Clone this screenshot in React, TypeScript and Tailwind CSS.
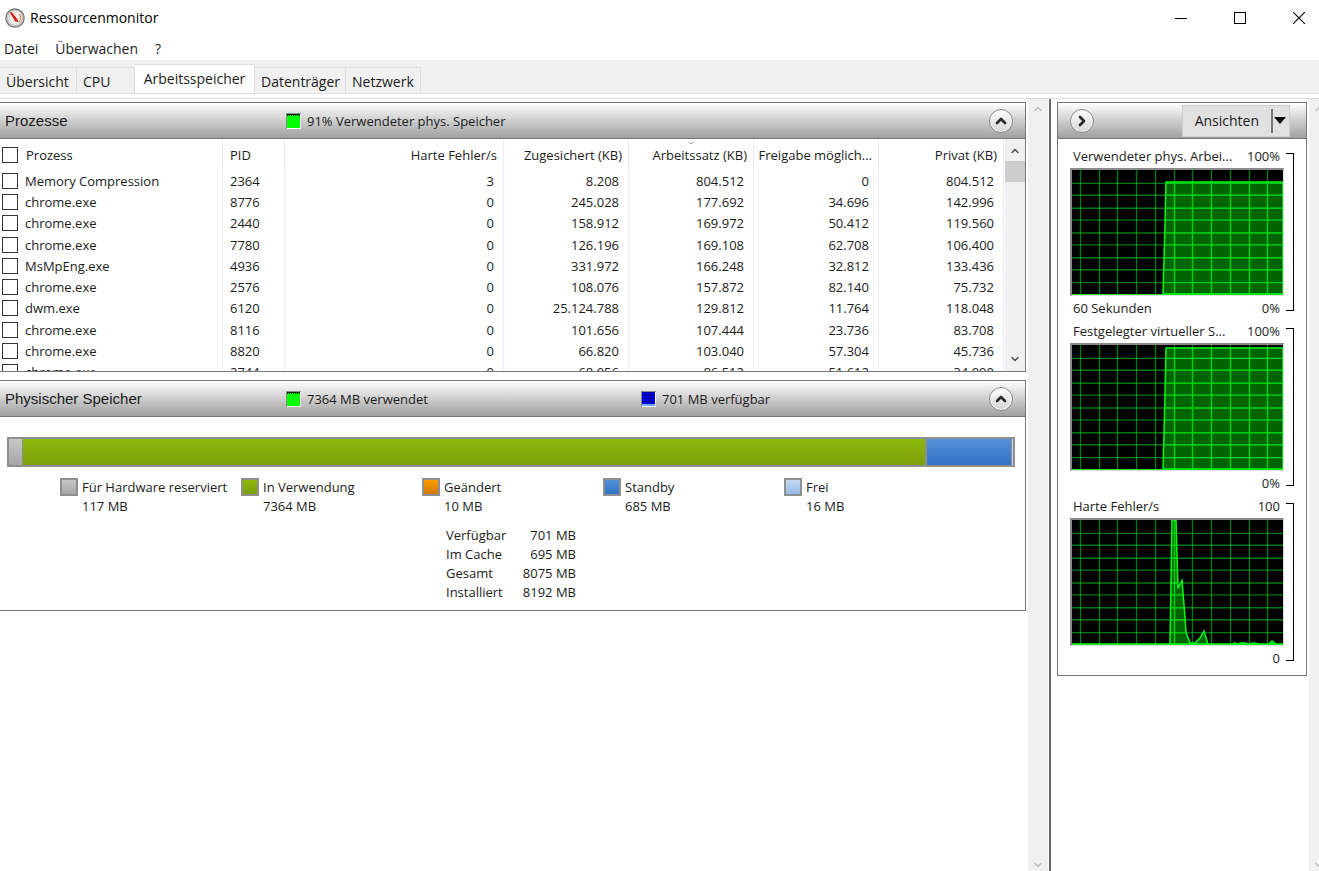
import { useState } from 'react';
import type { ReactNode } from 'react';
import clsx from 'clsx';
import { ChevronDown, ChevronRight, ChevronUp } from 'lucide-react';

const tabs = [
  { name: 'Übersicht', width: 'w-[77px]' },
  { name: 'CPU', width: 'w-[58px]' },
  { name: 'Arbeitsspeicher', width: 'w-[120px]' },
  { name: 'Datenträger', width: 'w-[91px]' },
  { name: 'Netzwerk', width: 'w-[75px]' },
];

const columns = [
  'Harte Fehler/s',
  'Zugesichert (KB)',
  'Arbeitssatz (KB)',
  'Freigabe möglich...',
  'Privat (KB)',
];

const processes = [
  ['Memory Compression', '2364', '3', '8.208', '804.512', '0', '804.512'],
  ['chrome.exe', '8776', '0', '245.028', '177.692', '34.696', '142.996'],
  ['chrome.exe', '2440', '0', '158.912', '169.972', '50.412', '119.560'],
  ['chrome.exe', '7780', '0', '126.196', '169.108', '62.708', '106.400'],
  ['MsMpEng.exe', '4936', '0', '331.972', '166.248', '32.812', '133.436'],
  ['chrome.exe', '2576', '0', '108.076', '157.872', '82.140', '75.732'],
  ['dwm.exe', '6120', '0', '25.124.788', '129.812', '11.764', '118.048'],
  ['chrome.exe', '8116', '0', '101.656', '107.444', '23.736', '83.708'],
  ['chrome.exe', '8820', '0', '66.820', '103.040', '57.304', '45.736'],
  ['chrome.exe', '2744', '0', '68.056', '86.512', '51.612', '34.900'],
];

const legend = [
  { name: 'Für Hardware reserviert', value: '117 MB', color: 'from-[#c8c8c8] to-[#a6a6a6]' },
  { name: 'In Verwendung', value: '7364 MB', color: 'from-[#8db90c] to-[#7c9f0a]' },
  { name: 'Geändert', value: '10 MB', color: 'from-[#ff9c05] to-[#cf7a00]' },
  { name: 'Standby', value: '685 MB', color: 'from-[#5590d8] to-[#3173c6]' },
  { name: 'Frei', value: '16 MB', color: 'from-[#c4d9f3] to-[#97b9e6]' },
];

const totals = [
  ['Verfügbar', '701 MB'],
  ['Im Cache', '695 MB'],
  ['Gesamt', '8075 MB'],
  ['Installiert', '8192 MB'],
];

const charts = [
  {
    title: 'Verwendeter phys. Arbei...',
    max: '100%',
    span: '60 Sekunden',
    min: '0%',
    points: '91,125 92,90 93,55 94,12 211,12 211,125',
  },
  {
    title: 'Festgelegter virtueller S...',
    max: '100%',
    span: '',
    min: '0%',
    points: '91,125 92,90 93,50 94,3 211,3 211,125',
  },
  {
    title: 'Harte Fehler/s',
    max: '100',
    span: '',
    min: '0',
    points:
      '0,125 98,125 100,0 104,0 106,69 110,61 113,98 114,113 118,124 123,124 128,119 132,112 136,125 160,125 163,124 166,125 169,124 173,124 176,125 182,124 187,125 197,125 200,122 204,125 211,125',
  },
];

const vertical = [8, 27, 45, 64, 83, 102, 120, 139, 158, 177, 195];
const horizontal = [13, 25, 38, 50, 63, 75, 88, 100, 113];

function Logo() {
  return (
    <svg viewBox="0 0 20 20" className="size-5">
      <circle cx="10" cy="10" r="9.2" fill="#c9c9c9" stroke="#777" strokeWidth="1.2" />
      <circle cx="10" cy="10" r="7.3" fill="#f3f1ee" stroke="#b5b5b5" strokeWidth="0.6" />
      <path d="M14.3 6.2a5.6 5.6 0 0 1-1 8.2" fill="none" stroke="#e89a7c" strokeWidth="1.5" />
      <path d="M5.7 13.8a5.6 5.6 0 0 1 0-7.6" fill="none" stroke="#c8c8c8" strokeWidth="1" />
      <path d="M4.6 3.9 7 4.4l5.8 7.4-2.6 1.8z" fill="#d8150f" />
      <path d="M10.2 13.6 12.8 11.8l.3 2.2z" fill="#8c2a22" />
    </svg>
  );
}

function RoundButton({ label, children }: { label: string; children: ReactNode }) {
  return (
    <button
      aria-label={label}
      className="flex size-6 items-center justify-center rounded-full border border-[#8a8a8a] bg-linear-to-b from-white to-[#d4d4d4] text-[#2b2b2b] shadow-[inset_0_0_0_1px_#f6f6f6]"
    >
      {children}
    </button>
  );
}

function Stat({ color, children }: { color: 'green' | 'blue'; children: ReactNode }) {
  return (
    <span className="flex w-[355px] shrink-0 items-center gap-[6px] last-of-type:w-auto">
      <svg viewBox="0 0 15 16" className="h-4 w-[15px]" shapeRendering="crispEdges">
        <rect width="15" height="16" fill="#fff" />
        <path d="M0 0H15V1H1V16H0z" fill="#8c8c8c" />
        {color === 'green' ? (
          <>
            <rect x="1" y="1" width="13" height="14" fill="#00ff00" />
            <rect x="1" y="1" width="13" height="1" fill="#00320a" />
            <path d="M1 2.5H14" stroke="#00320a" strokeDasharray="1 1" />
          </>
        ) : (
          <>
            <rect x="1" y="1" width="13" height="12" fill="#0000f0" />
            <path d="M1 1.5H14M1 4.5H14M1 7.5H14M1 10.5H14M4.5 1V13M7.5 1V13M10.5 1V13" stroke="#0000a0" />
            <rect x="1" y="13" width="13" height="2" fill="#66b0ff" />
          </>
        )}
      </svg>
      {children}
    </span>
  );
}

function PanelHeader({ title, children }: { title: string; children: ReactNode }) {
  return (
    <header className="flex h-9 items-center border-b border-[#777] bg-linear-to-b from-white to-[#a0a0a0] pr-3">
      <h2 className="w-[286px] shrink-0 pl-[5px] font-['Liberation_Sans',Arial,sans-serif] text-[15px]">{title}</h2>
      {children}
      <div className="ml-auto">
        <RoundButton label={`${title} einklappen`}>
          <ChevronUp className="size-4" strokeWidth={4} />
        </RoundButton>
      </div>
    </header>
  );
}

function ScrollBar() {
  return (
    <div className="flex w-5 shrink-0 flex-col items-center justify-between bg-[#f0f0f0] pt-1 text-[#bcbcbc]">
      <ChevronUp className="size-3" strokeWidth={3} />
      <ChevronDown className="size-3" strokeWidth={3} />
    </div>
  );
}

function Check({ label }: { label: string }) {
  return (
    <input
      type="checkbox"
      aria-label={label}
      className="size-4 shrink-0 appearance-none border border-[#333] bg-white checked:bg-[#333]"
    />
  );
}

function ProcessTable() {
  return (
    <div className="flex h-[232px] gap-px overflow-hidden">
      <div className="min-w-0 flex-1">
        <table className="h-[244px] w-full table-fixed border-collapse">
          <colgroup>
            <col />
            <col className="w-[62px]" />
            <col className="w-[219px]" />
            <col className="w-[125px]" />
            <col className="w-[125px]" />
            <col className="w-[125px]" />
            <col className="w-[125px]" />
          </colgroup>
          <thead>
            <tr className="h-[31px]">
              <th className="border-r border-[#e8eef5] p-0 pl-[2px] text-left font-normal">
                <span className="flex items-center gap-2">
                  <Check label="Alle Prozesse" />
                  Prozess
                </span>
              </th>
              <th className="border-r border-[#e8eef5] p-0 pl-[7px] text-left font-normal">PID</th>
              {columns.map((column) => (
                <th
                  key={column}
                  className="relative border-r border-[#e8eef5] p-0 pr-[6px] text-right font-normal whitespace-nowrap"
                >
                  {column === 'Arbeitssatz (KB)' && (
                    <ChevronDown className="absolute top-0 left-1/2 size-2 -translate-x-1/2 text-[#777]" />
                  )}
                  {column}
                </th>
              ))}
            </tr>
          </thead>
          <tbody>
            {processes.map(([name, pid, ...values]) => (
              <tr key={pid} className="h-[21px]">
                <td className="border-r border-[#e8f1fb] p-0 pl-[2px]">
                  <span className="flex items-center gap-[7px]">
                    <Check label={`${name} ${pid}`} />
                    {name}
                  </span>
                </td>
                <td className="border-r border-[#e8f1fb] p-0 pl-[7px]">{pid}</td>
                {values.map((value, i) => (
                  <td key={i} className="border-r border-[#e8f1fb] p-0 pr-[9px] text-right">
                    {value}
                  </td>
                ))}
              </tr>
            ))}
          </tbody>
        </table>
      </div>
      <div className="flex w-5 shrink-0 flex-col items-center bg-[#f0f0f0] py-[6px] text-[#505050]">
        <ChevronUp className="size-3" strokeWidth={3} />
        <div className="mt-1 h-[21px] w-5 bg-[#cdcdcd]" />
        <ChevronDown className="mt-auto size-3" strokeWidth={3} />
      </div>
    </div>
  );
}

function MemoryPanel() {
  return (
    <>
      <div className="mt-5 mr-[10px] ml-[7px] flex h-[30px] border-2 border-[#8f8f8f]">
        <div className="w-[14px] border-r border-[#8f8f8f] bg-linear-to-b from-[#c8c8c8] to-[#a6a6a6]" />
        <div className="flex-[7364] border-r-2 border-[#8f8f8f] bg-linear-to-b from-[#8db90c] to-[#7c9f0a]" />
        <div className="flex-[685] bg-linear-to-b from-[#5590d8] to-[#3173c6]" />
        <div className="w-[2px] border-l border-[#8f8f8f] bg-[#c4d9f3]" />
      </div>
      <ul className="mt-[11px] flex pl-[60px]">
        {legend.map((item) => (
          <li key={item.name} className="flex w-[181px] gap-1 whitespace-nowrap">
            <span className={clsx('size-[18px] border-2 border-[#8f8f8f] bg-linear-to-b', item.color)} />
            <span className="leading-[19px]">
              {item.name}
              <br />
              {item.value}
            </span>
          </li>
        ))}
      </ul>
      <dl className="mt-[10px] ml-[446px] grid w-[130px] grid-cols-2 pb-2 leading-[19px]">
        {totals.map(([name, value]) => (
          <div key={name} className="contents">
            <dt>{name}</dt>
            <dd className="text-right">{value}</dd>
          </div>
        ))}
      </dl>
    </>
  );
}

function Chart({ title, max, span, min, points }: (typeof charts)[number]) {
  return (
    <section className="flex h-[175px] gap-[2px] pr-3 pl-3">
      <div className="min-w-0 flex-1">
        <div className="flex h-[21px] justify-between pr-1 pl-[3px] leading-[18px] whitespace-nowrap">
          <h3>{title}</h3>
          <span>{max}</span>
        </div>
        <svg
          viewBox="0 0 211 126"
          preserveAspectRatio="none"
          className="block h-32 w-full border-2 border-r border-b border-[#8a8a8a] border-r-[#dcdcdc] border-b-[#dcdcdc] bg-black"
        >
          <polygon points={points} fill="#006400" />
          <g stroke="#00b81e" strokeOpacity="0.65" strokeWidth="1.4">
            {vertical.map((x) => (
              <path key={x} d={`M${x}.5 0V126`} />
            ))}
            {horizontal.map((y) => (
              <path key={y} d={`M0 ${y}.5H211`} />
            ))}
          </g>
          <clipPath id={`area-${max}-${title.length}`}>
            <polygon points={points} />
          </clipPath>
          <g
            stroke="#00dc14"
            strokeOpacity="0.75"
            strokeWidth="1.4"
            clipPath={`url(#area-${max}-${title.length})`}
          >
            {vertical.map((x) => (
              <path key={x} d={`M${x}.5 0V126`} />
            ))}
            {horizontal.map((y) => (
              <path key={y} d={`M0 ${y}.5H211`} />
            ))}
          </g>
          <path d="M0 125.5H211" stroke="#2fd83a" />
          <polygon points={points} fill="none" stroke="#00fa14" strokeWidth="1.5" />
        </svg>
        <div className="flex justify-between pr-1 pl-[3px] leading-6">
          <span>{span}</span>
          <span>{min}</span>
        </div>
      </div>
      <div className="mt-[6px] h-[158px] w-2 border border-l-0 border-black" />
    </section>
  );
}

export default function App() {
  const [active, setActive] = useState('Arbeitsspeicher');
  return (
    <div className="flex min-h-screen flex-col overflow-hidden bg-white font-['Open_Sans','Segoe_UI',sans-serif] text-[13px] leading-[18px] text-[#1c1c1c]">
      <div className="flex h-9 items-center gap-[5px] pl-[5px] text-sm text-black">
        <Logo />
        <h1 className="flex-1">Ressourcenmonitor</h1>
        <div className="flex items-center gap-[47px] pr-[14px]">
          <button aria-label="Minimieren" className="flex size-3 items-center">
            <span className="h-px w-3 bg-black" />
          </button>
          <button aria-label="Maximieren" className="size-3 border border-black" />
          <button aria-label="Schließen" className="size-3">
            <svg viewBox="0 0 12 12" className="size-3" fill="none" stroke="#000" strokeWidth="1.1">
              <path d="M0 0 12 12M12 0 0 12" />
            </svg>
          </button>
        </div>
      </div>

      <nav className="flex h-6 items-center gap-[17px] pt-[2px] pl-1 text-sm">
        <button>Datei</button>
        <button>Überwachen</button>
        <button>?</button>
      </nav>

      <div role="tablist" className="flex h-[34px] items-end border-b border-[#e2e2e2] bg-[#f0f0f0] text-sm">
        {tabs.map((tab) => (
          <button
            key={tab.name}
            role="tab"
            aria-selected={active === tab.name}
            onClick={() => setActive(tab.name)}
            className={clsx(
              'border-t border-r border-[#dedede] whitespace-nowrap',
              tab.width,
              active === tab.name ? 'h-[29px] bg-white' : 'h-[26px] pt-[2px] pl-[6px] text-left',
            )}
          >
            {tab.name}
          </button>
        ))}
      </div>
      <div className="h-[5px] border-b border-[#dcdcdc]" />

      <main className="flex flex-1">
        <div className="flex min-w-0 flex-1 flex-col gap-2 pt-[3px] pr-[2px]">
          <section className="border border-l-0 border-[#777]">
            <PanelHeader title="Prozesse">
              <Stat color="green">91% Verwendeter phys. Speicher</Stat>
            </PanelHeader>
            <ProcessTable />
          </section>
          <section className="border border-l-0 border-[#777]">
            <PanelHeader title="Physischer Speicher">
              <Stat color="green">7364 MB verwendet</Stat>
              <Stat color="blue">701 MB verfügbar</Stat>
            </PanelHeader>
            <MemoryPanel />
          </section>
        </div>
        <ScrollBar />
        <div className="ml-px w-[2px] bg-[#6a6a6a]" />
        <aside className="w-[258px] shrink-0 pt-[3px] pr-[2px] pl-[6px]">
          <div className="border border-[#777] pb-[3px]">
            <header className="flex h-9 items-center justify-between border-b border-[#777] bg-linear-to-b from-white to-[#a0a0a0] pr-4 pl-3">
              <RoundButton label="Diagramme ausblenden">
                <ChevronRight className="size-4" strokeWidth={4} />
              </RoundButton>
              <button className="flex h-8 items-center border border-[#d0d0d0] bg-[#e1e1e1] pr-[3px] pl-3 text-sm">
                Ansichten
                <span className="ml-3 h-6 w-[2px] bg-[#777]" />
                <svg viewBox="0 0 12 7" className="ml-px h-[7px] w-3">
                  <path d="M0 0H12L6 7z" fill="#000" />
                </svg>
              </button>
            </header>
            <div className="pt-2">
              {charts.map((chart) => (
                <Chart key={chart.title} {...chart} />
              ))}
            </div>
          </div>
        </aside>
        <div className="flex w-[10px] shrink-0 overflow-hidden">
          <ScrollBar />
        </div>
      </main>
    </div>
  );
}
